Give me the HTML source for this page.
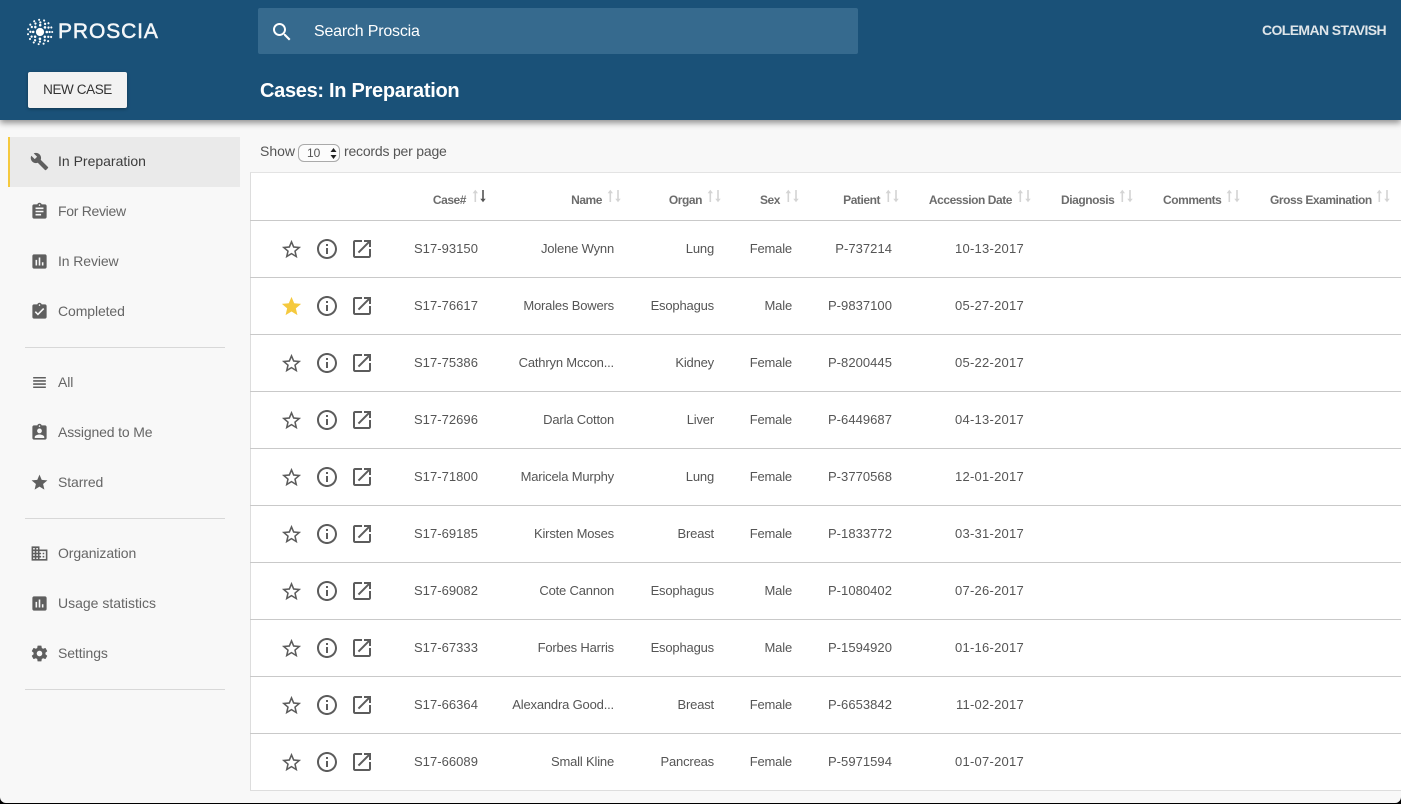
<!DOCTYPE html>
<html lang="en"><head><meta charset="utf-8"><title>Proscia</title>
<style>
*{box-sizing:border-box}
html,body{margin:0;padding:0;width:1401px;height:804px;overflow:hidden;background:#000;font-family:"Liberation Sans",sans-serif}
#page{position:absolute;left:0;top:0;width:1401px;height:803px;background:#f8f8f8;border-radius:0 0 6px 6px;overflow:hidden}
#head{position:absolute;left:0;top:0;width:1401px;height:120px;background:#1a5178;box-shadow:0 3px 6px rgba(0,0,0,.42);z-index:3}
.abs,#head span,#head svg,#head div{position:absolute;white-space:nowrap}
#search{left:258px;top:8px;width:600px;height:46px;background:#366a8e;border-radius:2px}
#btn{left:28px;top:72px;width:99px;height:36px;background:#f2f2f2;border-radius:2px;box-shadow:0 1px 3px rgba(0,0,0,.35);color:#333;font-size:13.5px;letter-spacing:-.4px;line-height:36px;text-align:center}
.nav{position:absolute;left:58px;font-size:14px;line-height:20px;color:#666;white-space:nowrap;letter-spacing:-.1px}
.ni{position:absolute;left:29.5px;width:19px;height:19px;fill:#5f5f5f}
.hr{position:absolute;left:25px;width:200px;height:1px;background:#d8d8d8}
#active{position:absolute;left:8px;top:137px;width:232px;height:50px;background:#eaeaea;border-left:2px solid #f5c93e}
#table{position:absolute;left:250px;top:172px;width:1151px;height:619px;background:#fff;border-left:1px solid #ddd;border-top:1px solid #e3e3e3;border-bottom:1px solid #ddd}
.row{position:absolute;left:250px;width:1151px;height:57px;border-bottom:1px solid #c9c9c9}
.row span{position:absolute;top:18px;line-height:20px;font-size:13px;letter-spacing:-.18px;color:#555;text-align:right;white-space:nowrap}
.a{left:100px;width:128px;letter-spacing:.05px!important}.b{left:240px;width:124px}.c{left:370px;width:94px}.d{left:470px;width:72px}.e{left:550px;width:92px;letter-spacing:.05px!important}.f{left:680px;width:94px;letter-spacing:.25px!important}
.row svg{position:absolute}
.s{left:30.4px;top:16.5px;width:23px;height:23px;fill:#5c5c5c}
.i{left:64.7px;top:15.5px;width:24px;height:24px;fill:#5c5c5c}
.o{left:100.2px;top:15.5px;width:24px;height:24px;fill:#5c5c5c}
.th{position:absolute;top:192px;font-size:12px;letter-spacing:-.45px;line-height:17px;font-weight:bold;color:#6c6c6c;white-space:nowrap;text-align:right}
.ar{position:absolute;top:189px;width:15px;height:14px}
</style></head><body>
<svg width="0" height="0" style="position:absolute"><defs>
<symbol id="star" viewBox="0 0 24 24"><path d="M12 17.27L18.18 21l-1.64-7.03L22 9.24l-7.19-.61L12 2 9.19 8.63 2 9.24l5.46 4.73L5.82 21z"/></symbol>
<symbol id="sb" viewBox="0 0 24 24"><path d="M22 9.24l-7.19-.62L12 2 9.19 8.63 2 9.24l5.46 4.73L5.82 21 12 17.27 18.18 21l-1.63-7.03L22 9.24zM12 15.4l-3.76 2.27 1-4.28-3.32-2.88 4.38-.38L12 6.1l1.71 4.04 4.38.38-3.32 2.88 1 4.28L12 15.4z"/></symbol>
<symbol id="info" viewBox="0 0 24 24"><path d="M11 17h2v-6h-2v6zm1-15C6.48 2 2 6.48 2 12s4.48 10 10 10 10-4.48 10-10S17.52 2 12 2zm0 18c-4.41 0-8-3.59-8-8s3.59-8 8-8 8 3.59 8 8-3.59 8-8 8zM11 9h2V7h-2v2z"/></symbol>
<symbol id="open" viewBox="0 0 24 24"><path d="M19 19H5V5h7V3H5c-1.11 0-2 .9-2 2v14c0 1.1.89 2 2 2h14c1.1 0 2-.9 2-2v-7h-2v7zM14 3v2h3.59l-9.83 9.83 1.41 1.41L19 6.41V10h2V3h-7z"/></symbol>
<symbol id="ass" viewBox="0 0 24 24"><path d="M19 3H5c-1.1 0-2 .9-2 2v14c0 1.1.9 2 2 2h14c1.1 0 2-.9 2-2V5c0-1.1-.9-2-2-2zM9 17H7v-7h2v7zm4 0h-2V7h2v10zm4 0h-2v-4h2v4z"/></symbol>
<symbol id="sort" viewBox="0 0 15 14"><path fill="#d4d4d4" d="M2.5 13V4.2H.6L3.3 .8 6 4.2H4.1V13z"/><path fill="#d4d4d4" d="M10.2 1v8.8H8.3l2.7 3.4 2.7-3.4h-1.9V1z"/></symbol>
</defs></svg>
<div id="page">
<div id="head">
<svg style="left:25.5px;top:18px" width="28" height="28" viewBox="0 0 28 28" fill="none" stroke="#fff" stroke-linecap="round"><circle cx="14" cy="14" r="4.1" fill="#fff" stroke="none"/><circle cx="14" cy="14" r="6.8" stroke-width="2.6" stroke-dasharray="0.01 5.33"/><circle cx="14" cy="14" r="9.6" stroke-width="2.3" stroke-dasharray="0.01 5.02"/><circle cx="14" cy="14" r="12.2" stroke-width="2.1" stroke-dasharray="0.01 5.1"/></svg>
<span style="left:58px;top:20px;font-size:21px;line-height:24px;color:#f4f7f9;letter-spacing:.9px;-webkit-text-stroke:.5px #f4f7f9">PROSCIA</span>
<div id="search">
<svg style="left:12px;top:12px" width="24" height="24" viewBox="0 0 24 24" fill="#fff"><path d="M15.5 14h-.79l-.28-.27C15.41 12.59 16 11.11 16 9.5 16 5.91 13.09 3 9.5 3S3 5.91 3 9.5 5.91 16 9.5 16c1.61 0 3.09-.59 4.23-1.57l.27.28v.79l5 4.99L20.49 19l-4.99-5zm-6 0C7.01 14 5 11.99 5 9.5S7.01 5 9.5 5 14 7.01 14 9.5 11.99 14 9.5 14z"/></svg>
<span style="left:56px;top:14px;font-size:16px;line-height:20px;color:#fff;letter-spacing:-.2px">Search Proscia</span>
</div>
<span style="left:1262px;top:21px;font-size:14px;line-height:18px;font-weight:bold;color:#dfe5e9;letter-spacing:-.62px">COLEMAN STAVISH</span>
<div id="btn">NEW CASE</div>
<span style="left:260px;top:79px;font-size:20px;line-height:24px;font-weight:bold;color:#fff;letter-spacing:-.3px">Cases: In Preparation</span>
</div>

<div id="active"></div>
<svg class="ni" style="top:151.5px" viewBox="0 0 24 24"><path d="M22.7 19l-9.1-9.1c.9-2.3.4-5-1.5-6.9-2-2-5-2.4-7.4-1.3L9 6 6 9 1.6 4.7C.4 7.1.9 10.1 2.9 12.1c1.9 1.9 4.6 2.4 6.9 1.5l9.1 9.1c.4.4 1 .4 1.4 0l2.3-2.3c.5-.4.5-1.1.1-1.4z"/></svg>
<div class="nav" style="top:151px;color:#3c3c3c;letter-spacing:0">In Preparation</div>
<svg class="ni" style="top:201.5px" viewBox="0 0 24 24"><path d="M19 3h-4.18C14.4 1.84 13.3 1 12 1c-1.3 0-2.4.84-2.82 2H5c-1.1 0-2 .9-2 2v14c0 1.1.9 2 2 2h14c1.1 0 2-.9 2-2V5c0-1.1-.9-2-2-2zm-7 0c.55 0 1 .45 1 1s-.45 1-1 1-1-.45-1-1 .45-1 1-1zm2 14H7v-2h7v2zm3-4H7v-2h10v2zm0-4H7V7h10v2z"/></svg>
<div class="nav" style="top:201px;letter-spacing:-.3px">For Review</div>
<svg class="ni" style="top:251.5px"><use href="#ass"/></svg>
<div class="nav" style="top:251px;letter-spacing:-.1px">In Review</div>
<svg class="ni" style="top:301.5px" viewBox="0 0 24 24"><path d="M19 3h-4.18C14.4 1.84 13.3 1 12 1c-1.3 0-2.4.84-2.82 2H5c-1.1 0-2 .9-2 2v14c0 1.1.9 2 2 2h14c1.1 0 2-.9 2-2V5c0-1.1-.9-2-2-2zm-7 0c.55 0 1 .45 1 1s-.45 1-1 1-1-.45-1-1 .45-1 1-1zm-2 14l-4-4 1.41-1.41L10 14.17l6.59-6.59L18 9l-8 8z"/></svg>
<div class="nav" style="top:301px">Completed</div>
<div class="hr" style="top:347px"></div>
<svg class="ni" style="top:372.5px" viewBox="0 0 24 24"><path d="M4 15h16v-2H4v2zm0 4h16v-2H4v2zm0-8h16V9H4v2zm0-6v2h16V5H4z"/></svg>
<div class="nav" style="top:372px">All</div>
<svg class="ni" style="top:422.5px" viewBox="0 0 24 24"><path d="M19 3h-4.18C14.4 1.84 13.3 1 12 1c-1.3 0-2.4.84-2.82 2H5c-1.1 0-2 .9-2 2v14c0 1.1.9 2 2 2h14c1.1 0 2-.9 2-2V5c0-1.1-.9-2-2-2zm-7 0c.55 0 1 .45 1 1s-.45 1-1 1-1-.45-1-1 .45-1 1-1zm0 4c1.66 0 3 1.34 3 3s-1.34 3-3 3-3-1.34-3-3 1.34-3 3-3zm6 12H6v-1.4c0-2 4-3.1 6-3.1s6 1.1 6 3.1V19z"/></svg>
<div class="nav" style="top:422px;letter-spacing:-.15px">Assigned to Me</div>
<svg class="ni" style="top:472.5px"><use href="#star"/></svg>
<div class="nav" style="top:472px">Starred</div>
<div class="hr" style="top:518px"></div>
<svg class="ni" style="top:543.5px" viewBox="0 0 24 24"><path d="M12 7V3H2v18h20V7H12zM6 19H4v-2h2v2zm0-4H4v-2h2v2zm0-4H4V9h2v2zm0-4H4V5h2v2zm4 12H8v-2h2v2zm0-4H8v-2h2v2zm0-4H8V9h2v2zm0-4H8V5h2v2zm10 12h-8v-2h2v-2h-2v-2h2v-2h-2V9h8v10zm-2-8h-2v2h2v-2zm0 4h-2v2h2v-2z"/></svg>
<div class="nav" style="top:543px">Organization</div>
<svg class="ni" style="top:593.5px"><use href="#ass"/></svg>
<div class="nav" style="top:593px;letter-spacing:0">Usage statistics</div>
<svg class="ni" style="top:643.5px" viewBox="0 0 24 24"><path d="M19.43 12.98c.04-.32.07-.64.07-.98s-.03-.66-.07-.98l2.11-1.65c.19-.15.24-.42.12-.64l-2-3.46c-.12-.22-.39-.3-.61-.22l-2.49 1c-.52-.4-1.08-.73-1.69-.98l-.38-2.65C14.46 2.18 14.25 2 14 2h-4c-.25 0-.46.18-.49.42l-.38 2.65c-.61.25-1.17.59-1.69.98l-2.49-1c-.23-.09-.49 0-.61.22l-2 3.46c-.13.22-.07.49.12.64l2.11 1.65c-.04.32-.07.65-.07.98s.03.66.07.98l-2.11 1.65c-.19.15-.24.42-.12.64l2 3.46c.12.22.39.3.61.22l2.49-1c.52.4 1.08.73 1.69.98l.38 2.65c.03.24.24.42.49.42h4c.25 0 .46-.18.49-.42l.38-2.65c.61-.25 1.17-.59 1.69-.98l2.49 1c.23.09.49 0 .61-.22l2-3.46c.12-.22.07-.49-.12-.64l-2.11-1.65zM12 15.5c-1.93 0-3.5-1.57-3.5-3.5s1.57-3.5 3.5-3.5 3.5 1.57 3.5 3.5-1.57 3.5-3.5 3.5z"/></svg>
<div class="nav" style="top:643px">Settings</div>
<div class="hr" style="top:689px"></div>

<div class="abs" style="left:260px;top:142px;font-size:14px;line-height:18px;color:#555;white-space:nowrap">Show</div>
<div class="abs" style="left:298px;top:144px;width:42px;height:18px;border:1px solid #aaa;border-radius:6px;background:#fcfcfc;font-size:12px;line-height:16px;color:#555;padding-left:8px">10
<svg class="abs" style="left:31px;top:3px" width="7" height="11" viewBox="0 0 7 11" fill="#222"><path d="M3.5 0L6.5 4H.5zM3.5 11L.5 7h6z"/></svg></div>
<div class="abs" style="left:344px;top:142px;font-size:14px;line-height:18px;color:#555;white-space:nowrap;letter-spacing:-.2px">records per page</div>

<div id="table"></div>
<div class="abs" style="left:250px;top:220px;width:1151px;height:1px;background:#c9c9c9"></div>

<div class="th" style="right:935px">Case#</div>
<svg class="ar" style="left:472px"><path fill="#d4d4d4" d="M2.5 13V4.2H.6L3.3 .8 6 4.2H4.1V13z"/><path fill="#555" d="M10.2 1v8.8H8.3l2.7 3.4 2.7-3.4h-1.9V1z"/></svg>
<div class="th" style="right:799px">Name</div><svg class="ar" style="left:607px"><use href="#sort"/></svg>
<div class="th" style="right:699px">Organ</div><svg class="ar" style="left:707px"><use href="#sort"/></svg>
<div class="th" style="right:621px">Sex</div><svg class="ar" style="left:785px"><use href="#sort"/></svg>
<div class="th" style="right:521px">Patient</div><svg class="ar" style="left:885px"><use href="#sort"/></svg>
<div class="th" style="right:389px">Accession Date</div><svg class="ar" style="left:1017px"><use href="#sort"/></svg>
<div class="th" style="left:1061px">Diagnosis</div><svg class="ar" style="left:1119px"><use href="#sort"/></svg>
<div class="th" style="left:1163px">Comments</div><svg class="ar" style="left:1226px"><use href="#sort"/></svg>
<div class="th" style="left:1270px">Gross Examination</div><svg class="ar" style="left:1376px"><use href="#sort"/></svg>

<div class="row" style="top:221px"><svg class="s"><use href="#sb"/></svg><svg class="i"><use href="#info"/></svg><svg class="o"><use href="#open"/></svg><span class="a">S17-93150</span><span class="b">Jolene Wynn</span><span class="c">Lung</span><span class="d">Female</span><span class="e">P-737214</span><span class="f">10-13-2017</span></div>
<div class="row" style="top:278px"><svg class="s" style="fill:#f5c93e"><use href="#star"/></svg><svg class="i"><use href="#info"/></svg><svg class="o"><use href="#open"/></svg><span class="a">S17-76617</span><span class="b">Morales Bowers</span><span class="c">Esophagus</span><span class="d">Male</span><span class="e">P-9837100</span><span class="f">05-27-2017</span></div>
<div class="row" style="top:335px"><svg class="s"><use href="#sb"/></svg><svg class="i"><use href="#info"/></svg><svg class="o"><use href="#open"/></svg><span class="a">S17-75386</span><span class="b">Cathryn Mccon...</span><span class="c">Kidney</span><span class="d">Female</span><span class="e">P-8200445</span><span class="f">05-22-2017</span></div>
<div class="row" style="top:392px"><svg class="s"><use href="#sb"/></svg><svg class="i"><use href="#info"/></svg><svg class="o"><use href="#open"/></svg><span class="a">S17-72696</span><span class="b">Darla Cotton</span><span class="c">Liver</span><span class="d">Female</span><span class="e">P-6449687</span><span class="f">04-13-2017</span></div>
<div class="row" style="top:449px"><svg class="s"><use href="#sb"/></svg><svg class="i"><use href="#info"/></svg><svg class="o"><use href="#open"/></svg><span class="a">S17-71800</span><span class="b">Maricela Murphy</span><span class="c">Lung</span><span class="d">Female</span><span class="e">P-3770568</span><span class="f">12-01-2017</span></div>
<div class="row" style="top:506px"><svg class="s"><use href="#sb"/></svg><svg class="i"><use href="#info"/></svg><svg class="o"><use href="#open"/></svg><span class="a">S17-69185</span><span class="b">Kirsten Moses</span><span class="c">Breast</span><span class="d">Female</span><span class="e">P-1833772</span><span class="f">03-31-2017</span></div>
<div class="row" style="top:563px"><svg class="s"><use href="#sb"/></svg><svg class="i"><use href="#info"/></svg><svg class="o"><use href="#open"/></svg><span class="a">S17-69082</span><span class="b">Cote Cannon</span><span class="c">Esophagus</span><span class="d">Male</span><span class="e">P-1080402</span><span class="f">07-26-2017</span></div>
<div class="row" style="top:620px"><svg class="s"><use href="#sb"/></svg><svg class="i"><use href="#info"/></svg><svg class="o"><use href="#open"/></svg><span class="a">S17-67333</span><span class="b">Forbes Harris</span><span class="c">Esophagus</span><span class="d">Male</span><span class="e">P-1594920</span><span class="f">01-16-2017</span></div>
<div class="row" style="top:677px"><svg class="s"><use href="#sb"/></svg><svg class="i"><use href="#info"/></svg><svg class="o"><use href="#open"/></svg><span class="a">S17-66364</span><span class="b">Alexandra Good...</span><span class="c">Breast</span><span class="d">Female</span><span class="e">P-6653842</span><span class="f">11-02-2017</span></div>
<div class="row" style="top:734px;border-bottom:0"><svg class="s"><use href="#sb"/></svg><svg class="i"><use href="#info"/></svg><svg class="o"><use href="#open"/></svg><span class="a">S17-66089</span><span class="b">Small Kline</span><span class="c">Pancreas</span><span class="d">Female</span><span class="e">P-5971594</span><span class="f">01-07-2017</span></div>
</div>
</body></html>
